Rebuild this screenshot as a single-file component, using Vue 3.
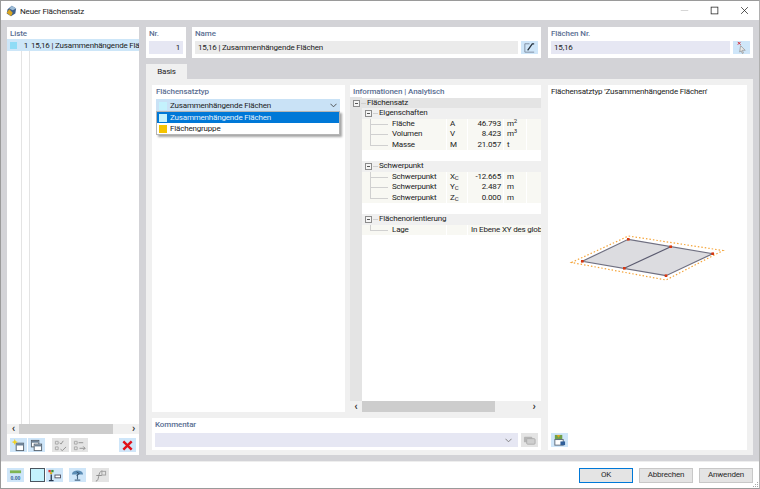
<script setup>
const listRows = [{ nr: 1, name: '15,16 | Zusammenhängende Flächen' }]

const treeRows = [
  { type: 'root', label: 'Flächensatz' },
  { type: 'group', label: 'Eigenschaften' },
  { type: 'item', label: 'Fläche', sym: 'A', value: '46.793', unit: 'm', sup: '2' },
  { type: 'item', label: 'Volumen', sym: 'V', value: '8.423', unit: 'm', sup: '3' },
  { type: 'item', label: 'Masse', sym: 'M', value: '21.057', unit: 't', last: true },
  { type: 'blank' },
  { type: 'group', label: 'Schwerpunkt' },
  { type: 'item', label: 'Schwerpunkt', sym: 'X', sub: 'C', value: '-12.665', unit: 'm' },
  { type: 'item', label: 'Schwerpunkt', sym: 'Y', sub: 'C', value: '2.487', unit: 'm' },
  { type: 'item', label: 'Schwerpunkt', sym: 'Z', sub: 'C', value: '0.000', unit: 'm', last: true },
  { type: 'blank' },
  { type: 'group', label: 'Flächenorientierung' },
  { type: 'wide', label: 'Lage', text: 'In Ebene XY des glob', last: true },
]

const options = [
  { label: 'Zusammenhängende Flächen', color: '#c4f2fd', active: true },
  { label: 'Flächengruppe', color: '#f5c400', active: false },
]
</script>

<template>
  <div class="window">
    <header class="titlebar">
      <svg class="app-icon" viewBox="0 0 14 14">
        <path d="M8 1l5 3-1 6-5 3-5-3 1-5z" fill="#3f5f8a" />
        <path d="M2 9l3-4 4 4-2 4z" fill="#d9a520" />
        <path d="M8 1l5 3-4 2-4-2z" fill="#9dbcd6" />
      </svg>
      <span class="title">Neuer Flächensatz</span>
      <div class="win-buttons">
        <svg viewBox="0 0 12 12"><path d="M1 6h10" stroke="#c8c8c8" /></svg>
        <svg viewBox="0 0 12 12"><rect x="1.500" y="1.500" width="9" height="9" fill="none" stroke="#222" /></svg>
        <svg viewBox="0 0 12 12"><path d="M1.500 1.500l9 9m0-9l-9 9" stroke="#222" /></svg>
      </div>
    </header>

    <main class="body">
      <aside class="list-panel">
        <h3 class="caption list-caption">Liste</h3>
        <div class="list">
          <div v-for="row in listRows" :key="row.nr" class="list-row">
            <i class="list-swatch"></i>
            <span class="list-nr">{{ row.nr }}</span>
            <span class="list-name">{{ row.name }}</span>
          </div>
        </div>
        <div class="scrollbar list-scroll">
          <span class="arrow">‹</span>
          <i class="thumb"></i>
          <span class="arrow">›</span>
        </div>
        <div class="list-tools">
          <button class="tool blue">
            <svg viewBox="0 0 16 14"><rect x="5.500" y="4.500" width="8" height="8" fill="#fff" stroke="#54606c" /><path d="M5.500 4.500h8v2.500h-8z" fill="#6d8398" /><path d="M4 0l1 2.300L7.300 3.300 5 4.300 4 6.500 3 4.300.7 3.300 3 2.300z" fill="#f2d21f" /></svg>
          </button>
          <button class="tool blue">
            <svg viewBox="0 0 16 14"><rect x="2.500" y="1.500" width="8" height="7" fill="#fff" stroke="#54606c" /><path d="M3 2h7v2H3z" fill="#6d8398" /><rect x="5.500" y="5.500" width="8" height="7" fill="#fff" stroke="#54606c" /><path d="M6 6h7v2H6z" fill="#6d8398" /></svg>
          </button>
          <button class="tool grey gap-left">
            <svg viewBox="0 0 16 14"><path d="M2.500 2.500h3v3h-3zM2.500 8.500h3v3h-3z" fill="none" stroke="#a8a8a8" /><path d="M7 4l1.500 1.500L11 2M8 11l2 1.500 4-4" fill="none" stroke="#8f8f8f" /></svg>
          </button>
          <button class="tool grey">
            <svg viewBox="0 0 16 14"><path d="M2.500 2.500h3v3h-3zM2.500 8.500h3v3h-3z" fill="none" stroke="#a8a8a8" /><path d="M7 4h5M8 10h6M12 8l2 2-2 2" fill="none" stroke="#8f8f8f" /></svg>
          </button>
          <button class="tool blue push-right">
            <svg viewBox="0 0 16 14"><path d="M3.500 2.500l9 9m0-9l-9 9" stroke="#e0101a" stroke-width="2.600" /></svg>
          </button>
        </div>
      </aside>

      <section class="content">
        <div class="top-row">
          <div class="field-panel nr-panel">
            <h3 class="caption">Nr.</h3>
            <div class="input input-lilac right">1</div>
          </div>
          <div class="field-panel name-panel">
            <h3 class="caption">Name</h3>
            <div class="input-line">
              <div class="input input-grey">15,16 | Zusammenhängende Flächen</div>
              <button class="tool blue small">
                <svg viewBox="0 0 16 14"><path d="M3 12V3h5M3 12h10" fill="none" stroke="#7d8da0" /><path d="M6 10l5-7h2" fill="none" stroke="#26323e" stroke-width="1.400" /></svg>
              </button>
            </div>
          </div>
          <div class="field-panel faces-panel">
            <h3 class="caption">Flächen Nr.</h3>
            <div class="input-line">
              <div class="input input-lilac">15,16</div>
              <button class="tool blue small">
                <svg viewBox="0 0 16 14"><path d="M7 5l5 5H9l1 3-1 .5-1.500-3L6 12z" fill="#e8e8e8" stroke="#8a8a8a" stroke-width=".7" /><path d="M4 1l3 3m0-3L4 4" stroke="#d3222a" /></svg>
              </button>
            </div>
          </div>
        </div>

        <div class="tab-strip"><span class="tab">Basis</span></div>

        <div class="tab-page">
          <div class="tab-left">
            <div class="tab-columns">
              <div class="type-panel">
                <h3 class="caption">Flächensatztyp</h3>
                <div class="combo">
                  <i class="swatch" style="background: #c4f2fd"></i>
                  <span>Zusammenhängende Flächen</span>
                  <svg class="chevron" viewBox="0 0 8 5"><path d="M.5.500L4 4 7.500.500" fill="none" stroke="#444" /></svg>
                  <ul class="combo-menu">
                    <li v-for="opt in options" :key="opt.label" :class="{ active: opt.active }">
                      <i class="swatch" :style="{ background: opt.color }"></i>{{ opt.label }}
                    </li>
                  </ul>
                </div>
              </div>

              <div class="info-panel">
                <h3 class="caption info-caption">Informationen | Analytisch</h3>
                <div class="tree">
                  <div v-for="(row, i) in treeRows" :key="i" class="tree-row" :class="row.type">
                    <template v-if="row.type === 'root' || row.type === 'group'">
                      <i class="expander"></i><i class="dash"></i>
                      <span class="tree-label">{{ row.label }}</span>
                    </template>
                    <template v-else-if="row.type === 'item'">
                      <i class="branch" :class="{ last: row.last }"></i>
                      <span class="cell c-label">{{ row.label }}</span>
                      <span class="cell c-sym">{{ row.sym }}<sub v-if="row.sub">{{ row.sub }}</sub></span>
                      <span class="cell c-value">{{ row.value }}</span>
                      <span class="cell c-unit">{{ row.unit }}<sup v-if="row.sup">{{ row.sup }}</sup></span>
                      <span class="cell c-rest"></span>
                    </template>
                    <template v-else-if="row.type === 'wide'">
                      <i class="branch last"></i>
                      <span class="cell c-label">{{ row.label }}</span>
                      <span class="cell c-sym"></span>
                      <span class="cell c-wide">{{ row.text }}</span>
                    </template>
                  </div>
                </div>
                <div class="scrollbar info-scroll">
                  <span class="arrow">‹</span>
                  <i class="thumb"></i>
                  <span class="arrow">›</span>
                </div>
              </div>
            </div>

            <div class="comment-panel">
              <h3 class="caption">Kommentar</h3>
              <div class="input-line">
                <div class="input input-lilac comment-input">
                  <svg class="chevron" viewBox="0 0 8 5"><path d="M.5.500L4 4 7.500.500" fill="none" stroke="#777" /></svg>
                </div>
                <button class="tool grey small">
                  <svg viewBox="0 0 16 14"><rect x="2" y="3" width="9" height="6" rx="1" fill="#b5b5b5" /><rect x="5" y="5" width="9" height="6" rx="1" fill="#cfcfcf" stroke="#adadad" /></svg>
                </button>
              </div>
            </div>
          </div>

          <div class="preview-panel">
            <p class="preview-title">Flächensatztyp 'Zusammenhängende Flächen'</p>
            <svg class="drawing" viewBox="548 225 199 60">
              <path d="M571.500 262.500L628.500 236 723 250.500 666 280z" fill="none" stroke="#f5a63c" stroke-width="1.200" stroke-dasharray="1.500 2" />
              <path d="M582.300 261.300L628.300 239.300 712.700 253.700 666 275.700z" fill="#dcdce0" stroke="#6f6f80" stroke-width="1.200" />
              <path d="M624.300 268.300L670.700 246.700" stroke="#5b5b70" stroke-width="1.200" />
              <g fill="#d8360f">
                <rect x="581" y="260" width="2.600" height="2.600" />
                <rect x="627" y="238" width="2.600" height="2.600" />
                <rect x="669.400" y="245.400" width="2.600" height="2.600" />
                <rect x="711.400" y="252.400" width="2.600" height="2.600" />
                <rect x="664.700" y="274.400" width="2.600" height="2.600" />
                <rect x="623" y="267" width="2.600" height="2.600" />
              </g>
            </svg>
            <button class="tool blue preview-tool">
              <svg viewBox="0 0 16 14"><rect x="3" y="1" width="8" height="5" fill="#6fa04a" /><rect x="3" y="6" width="9" height="6" fill="#fff" stroke="#5a6878" /><path d="M5 1l2 3 2-3" fill="#d9a520" /><rect x="9" y="8" width="5" height="4" fill="#2f5f9a" /></svg>
            </button>
          </div>
        </div>
      </section>
    </main>

    <footer class="footer">
      <div class="foot-icons">
        <button class="tool blue">
          <svg viewBox="0 0 16 14"><rect x="2" y="1.500" width="12" height="3" fill="#7fb552" /><text x="8" y="11.500" text-anchor="middle" class="foot-num">0.00</text></svg>
        </button>
        <i class="foot-swatch"></i>
        <button class="tool blue tight">
          <svg viewBox="0 0 16 14"><rect x="1.500" y="1" width="2.500" height="2.500" fill="#d33" /><rect x="4.500" y="1" width="2.500" height="2.500" fill="#3a8f3a" /><rect x="3" y="3.500" width="2.500" height="2" fill="#e0b020" /><path d="M4.500 6v6M2 12.500h5" stroke="#26364e" stroke-width="1.400" /><rect x="8.500" y="6.500" width="6" height="3" fill="#fff" stroke="#556" /></svg>
        </button>
        <button class="tool blue">
          <svg viewBox="0 0 16 14"><path d="M2 6a6 4.500 0 0 1 12 0z" fill="#5c8db5" /><path d="M8 6v5M5 12h6" stroke="#4a6a88" stroke-width="1.200" /><path d="M7 3l3 2-3 2" fill="none" stroke="#2d4a66" /></svg>
        </button>
        <button class="tool grey">
          <svg viewBox="0 0 16 14"><path d="M3 13c2 0 2.500-2 3-5S7.500 2 10 2" fill="none" stroke="#8a8a8a" /><path d="M3.500 7h6" stroke="#8a8a8a" /><rect x="9.500" y="2.500" width="4" height="4" fill="none" stroke="#a0a0a0" /></svg>
        </button>
      </div>
      <div class="foot-actions">
        <button class="btn primary">OK</button>
        <button class="btn">Abbrechen</button>
        <button class="btn">Anwenden</button>
      </div>
      <svg class="grip" viewBox="0 0 6 6">
        <path d="M4 0h1v1H4zM2 2h1v1H2zM4 2h1v1H4zM0 4h1v1H0zM2 4h1v1H2zM4 4h1v1H4z" fill="#a8a8a8" />
      </svg>
    </footer>
  </div>
</template>

<style scoped>
* {
  box-sizing: border-box;
}

.window {
  position: relative;
  width: 760px;
  height: 489px;
  display: flex;
  flex-direction: column;
  background: #fff;
  border: 1px solid #9a9a9a;
  border-right-color: #b0b0b0;
  font-family: Roboto, "Noto Sans", sans-serif;
  font-size: 8px;
  letter-spacing: -0.18px;
  color: #222;
  overflow: hidden;
}

.titlebar {
  height: 19px;
  flex: none;
  display: flex;
  align-items: center;
  padding-left: 4px;
  font-size: 8.100px;
}

.app-icon {
  width: 12px;
  height: 12px;
  margin-right: 3px;
}

.win-buttons {
  margin-left: auto;
  display: flex;
  gap: 21px;
  margin-right: 10px;
}

.win-buttons svg {
  width: 9px;
  height: 9px;
}

.body {
  flex: 1;
  min-height: 0;
  display: flex;
  gap: 7px;
  padding: 7px 6px 6px;
  background: #d3d3d7;
}

.caption {
  margin: 0;
  font-size: 8px;
  font-weight: 500;
  letter-spacing: -0.1px;
  color: #5b6f93;
  line-height: 11px;
}

.list-panel {
  width: 132px;
  display: flex;
  flex-direction: column;
  background: #fff;
  padding-bottom: 3px;
}

.list-caption {
  padding: 1px 3px 0;
  height: 12px;
}

.list {
  flex: 1;
  background:
    linear-gradient(#e4e4e4, #e4e4e4) 14px 0 / 1px 100% no-repeat,
    linear-gradient(#e4e4e4, #e4e4e4) 22px 0 / 1px 100% no-repeat;
}

.list-row {
  height: 12px;
  display: flex;
  align-items: center;
  background: #cde6f8;
  white-space: nowrap;
  overflow: hidden;
}

.list-swatch {
  width: 7px;
  height: 7px;
  margin-left: 3px;
  background: #8fdcf6;
  flex: none;
}

.list-nr {
  width: 8px;
  margin-left: 3px;
  text-align: right;
  flex: none;
}

.list-name {
  margin-left: 3px;
}

.scrollbar {
  display: flex;
  align-items: center;
  background: #f0f0f0;
  flex: none;
}

.scrollbar .arrow {
  width: 11px;
  text-align: center;
  font-weight: 700;
  font-size: 11px;
  line-height: 10px;
  color: #333;
  flex: none;
}

.scrollbar .thumb {
  height: 100%;
  background: #cdcdcd;
  display: block;
}

.list-scroll {
  height: 10px;
  padding: 0 0 0 1px;
}

.list-scroll .thumb {
  width: 94px;
  margin: 0 15px 0 0;
}

.list-tools {
  display: flex;
  align-items: center;
  gap: 1px;
  padding: 4px 3px 0 3px;
}

.tool {
  width: 17px;
  height: 14px;
  padding: 0;
  border: 0;
  display: flex;
  align-items: center;
  justify-content: center;
  flex: none;
}

.tool svg {
  width: 15px;
  height: 13px;
}

.tool.blue {
  background: #cfe6f9;
}

.tool.grey {
  background: #e4e4e4;
}

.gap-left {
  margin-left: 6px;
}

.tool.grey + .tool.grey {
  margin-left: 1px;
}

.push-right {
  margin-left: auto;
}

.content {
  flex: 1;
  min-width: 0;
  display: flex;
  flex-direction: column;
}

.top-row {
  display: flex;
  gap: 6px;
  height: 31px;
  flex: none;
}

.field-panel {
  background: #fff;
  padding: 1px 3px 0;
}

.nr-panel {
  width: 40px;
}

.name-panel {
  width: 349px;
}

.faces-panel {
  width: 205px;
  margin-left: 1px;
}

.input-line {
  display: flex;
  align-items: center;
  gap: 3px;
  margin-top: 2px;
}

.input {
  height: 13px;
  line-height: 13px;
  padding: 0 3px;
  flex: 1;
  min-width: 0;
}

.field-panel > .input {
  margin-top: 2px;
}

.input-lilac {
  background: #e6e7f3;
}

.input-grey {
  background: #ebebeb;
}

.right {
  text-align: right;
}

.tool.small {
  height: 13px;
}

.tab-strip {
  height: 21px;
  flex: none;
  display: flex;
  align-items: flex-end;
}

.tab {
  width: 41px;
  height: 15px;
  background: #f0f0f0;
  text-align: center;
  line-height: 16px;
}

.tab-page {
  flex: 1;
  min-height: 0;
  display: flex;
  gap: 7px;
  background: #f0f0f0;
  padding: 6px 6px 5px;
}

.tab-left {
  width: 389px;
  display: flex;
  flex-direction: column;
  gap: 6px;
}

.tab-columns {
  flex: 1;
  min-height: 0;
  display: flex;
  gap: 5px;
}

.type-panel {
  width: 193px;
  background: #fff;
  padding: 1px 5px 1px 4px;
}

.combo {
  position: relative;
  margin-top: 2px;
  height: 13px;
  background: #c9e2f6;
  display: flex;
  align-items: center;
  padding-left: 3px;
}

.swatch {
  width: 8px;
  height: 8px;
  margin-right: 3px;
  flex: none;
  display: inline-block;
}

.chevron {
  width: 7px;
  height: 5px;
  margin-left: auto;
  margin-right: 3px;
}

.combo-menu {
  position: absolute;
  left: 0;
  top: 12px;
  width: 100%;
  margin: 0;
  padding: 0;
  list-style: none;
  background: #fff;
  border: 1px solid #b5b5b5;
  box-shadow: 2px 2px 2px rgb(0 0 0 / 0.35);
}

.combo-menu li {
  height: 11px;
  display: flex;
  align-items: center;
  padding-left: 2px;
}

.combo-menu li.active {
  background: #0078d7;
  color: #e6f2fb;
}

.info-panel {
  width: 191px;
  display: flex;
  flex-direction: column;
  background: #fff;
}

.info-caption {
  padding: 1px 3px 0;
  height: 12px;
}

.tree {
  flex: 1;
  min-height: 0;
  overflow: hidden;
  padding-top: 0.500px;
  background: linear-gradient(#e4e4e4, #e4e4e4) 0 0 / 12px 100% no-repeat;
}

.tree-row {
  height: 10.6px;
  line-height: 10.6px;
  display: flex;
  align-items: stretch;
  white-space: nowrap;
}

.tree-row.root {
  background: #e4e4e4;
  padding-left: 3px;
}

.tree-row.group {
  margin-left: 12px;
  padding-left: 3px;
  background: #f0f0f0;
}

.tree-row.blank {
  margin-left: 12px;
}

.tree-row.item,
.tree-row.wide {
  margin-left: 12px;
  background: #f8f8f3;
}

.expander {
  width: 7px;
  height: 7px;
  margin-top: 2px;
  border: 1px solid #8c8c8c;
  background: linear-gradient(#555, #555) center / 3px 1px no-repeat #f5f5f5;
  flex: none;
}

.dash {
  width: 5px;
  height: 1px;
  margin: 5px 1px 0;
  background: #d0d0d0;
  flex: none;
}

.branch {
  width: 22px;
  flex: none;
  margin-left: 8px;
  background:
    linear-gradient(#d0d0d0, #d0d0d0) 0 0 / 1px 100% no-repeat,
    linear-gradient(#d0d0d0, #d0d0d0) 0 5px / 18px 1px no-repeat;
}

.branch.last {
  background:
    linear-gradient(#d0d0d0, #d0d0d0) 0 0 / 1px 5px no-repeat,
    linear-gradient(#d0d0d0, #d0d0d0) 0 5px / 18px 1px no-repeat;
}

.cell {
  border-right: 1px solid #fff;
  padding: 0 2px;
  flex: none;
}

.c-label {
  width: 55px;
  padding-left: 0;
}

.c-sym {
  width: 21px;
  padding-left: 3px;
}

.c-value {
  width: 36px;
  text-align: right;
}

.c-unit {
  width: 23px;
  padding-left: 3px;
}

.c-rest {
  flex: 1;
  border-right: 0;
}

.c-wide {
  flex: 1;
  border-right: 0;
  padding-left: 3px;
  overflow: hidden;
}

sup,
sub {
  font-size: 6px;
  line-height: 0;
}

sub {
  vertical-align: -1px;
}

sup {
  vertical-align: 3px;
}

.info-scroll {
  height: 11px;
  padding: 0 1px 0 0;
}

.info-scroll .arrow {
  width: 12px;
}

.info-scroll .thumb {
  width: 134px;
  margin-right: 33px;
}

.comment-panel {
  height: 32px;
  flex: none;
  background: #fff;
  padding: 1px 3px 0;
}

.comment-panel .input-line {
  margin-top: 3px;
}

.comment-panel .input {
  height: 14px;
}

.comment-panel .tool {
  height: 14px;
}

.comment-input {
  display: flex;
  align-items: center;
}

.preview-panel {
  flex: 1;
  min-width: 0;
  display: flex;
  flex-direction: column;
  background: #fff;
}

.preview-title {
  margin: 0;
  padding: 1px 3px 0;
  line-height: 11px;
}

.drawing {
  width: 199px;
  height: 60px;
  margin-top: 128px;
  flex: none;
}

.preview-tool {
  margin: auto 0 3px 3px;
}

.footer {
  height: 27px;
  flex: none;
  display: flex;
  align-items: center;
  justify-content: space-between;
  padding: 0 6px;
  border-top: 1px solid #eeeeee;
}

.foot-icons {
  display: flex;
  align-items: center;
  gap: 6px;
}

.foot-num {
  font-size: 5.500px;
  font-weight: 700;
  fill: #2e5f93;
}

.foot-swatch {
  width: 15px;
  height: 14px;
  background: #c4f2fd;
  border: 1px solid #4a5560;
}

.tool.tight {
  margin-left: -5px;
}

.foot-actions {
  display: flex;
  gap: 6px;
}

.btn {
  width: 54px;
  height: 15px;
  padding: 0;
  background: #e4e4e4;
  border: 1px solid #c8c8c8;
  font: inherit;
  letter-spacing: inherit;
  color: #2a2a2a;
  line-height: 12px;
}

.btn.primary {
  border: 1px solid #0078d7;
}

.grip {
  position: absolute;
  right: 0;
  bottom: 0;
  width: 6px;
  height: 6px;
}
</style>
